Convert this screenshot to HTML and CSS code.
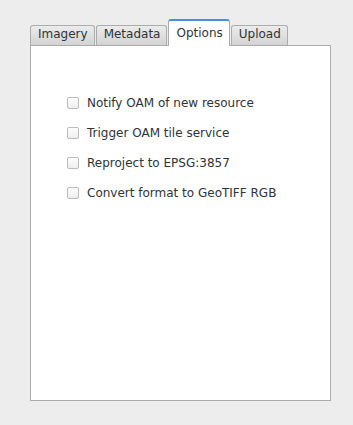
FILE: index.html
```html
<!DOCTYPE html>
<html lang="en">
<head>
    <meta charset="UTF-8">
    <title>Upload Options</title>
    <link rel="stylesheet" href="styles.css">
</head>
<body>
    <div class="tabs">
        <div class="tab">Imagery</div>
        <div class="tab">Metadata</div>
        <div class="tab active">Options</div>
        <div class="tab">Upload</div>
    </div>
    <div class="panel">
        <label class="option"><span class="box"></span>Notify OAM of new resource</label>
        <label class="option"><span class="box"></span>Trigger OAM tile service</label>
        <label class="option"><span class="box"></span>Reproject to EPSG:3857</label>
        <label class="option"><span class="box"></span>Convert format to GeoTIFF RGB</label>
    </div>
</body>
</html>
```
FILE: styles.css
```css
body {
    margin: 0;
    padding: 19px 22px 0 30px;
    background-color: #ededed;
    font-family: "DejaVu Sans", sans-serif;
    font-size: 12px;
    color: #2e3436;
}
.tabs {
    display: flex;
    align-items: flex-end;
    height: 26px;
}
.tab {
    height: 19px;
    line-height: 16px;
    padding: 0 6px 0 7px;
    border: 1px solid #a9adab;
    border-bottom: none;
    border-radius: 3px 3px 0 0;
    background: linear-gradient(#ececec, #d3d3d3);
    margin-right: 1px;
}
.tab.active {
    height: 25px;
    line-height: 24px;
    background: #ffffff;
    border-top: 2px solid #4a90d9;
    border-color: #4a90d9 #a9adab;
    position: relative;
    top: 1px;
}
.panel {
    height: 356px;
    box-sizing: border-box;
    background-color: #ffffff;
    border: 1px solid #a9adab;
    padding: 49px 0 0 36px;
    display: flex;
    flex-direction: column;
    gap: 15px;
}
.option {
    display: flex;
    align-items: center;
    height: 15px;
}
.box {
    width: 10px;
    height: 10px;
    border: 1px solid #b8bcba;
    border-radius: 2px;
    background: linear-gradient(#fdfdfd, #eeeeee);
    margin-right: 8px;
}
```
